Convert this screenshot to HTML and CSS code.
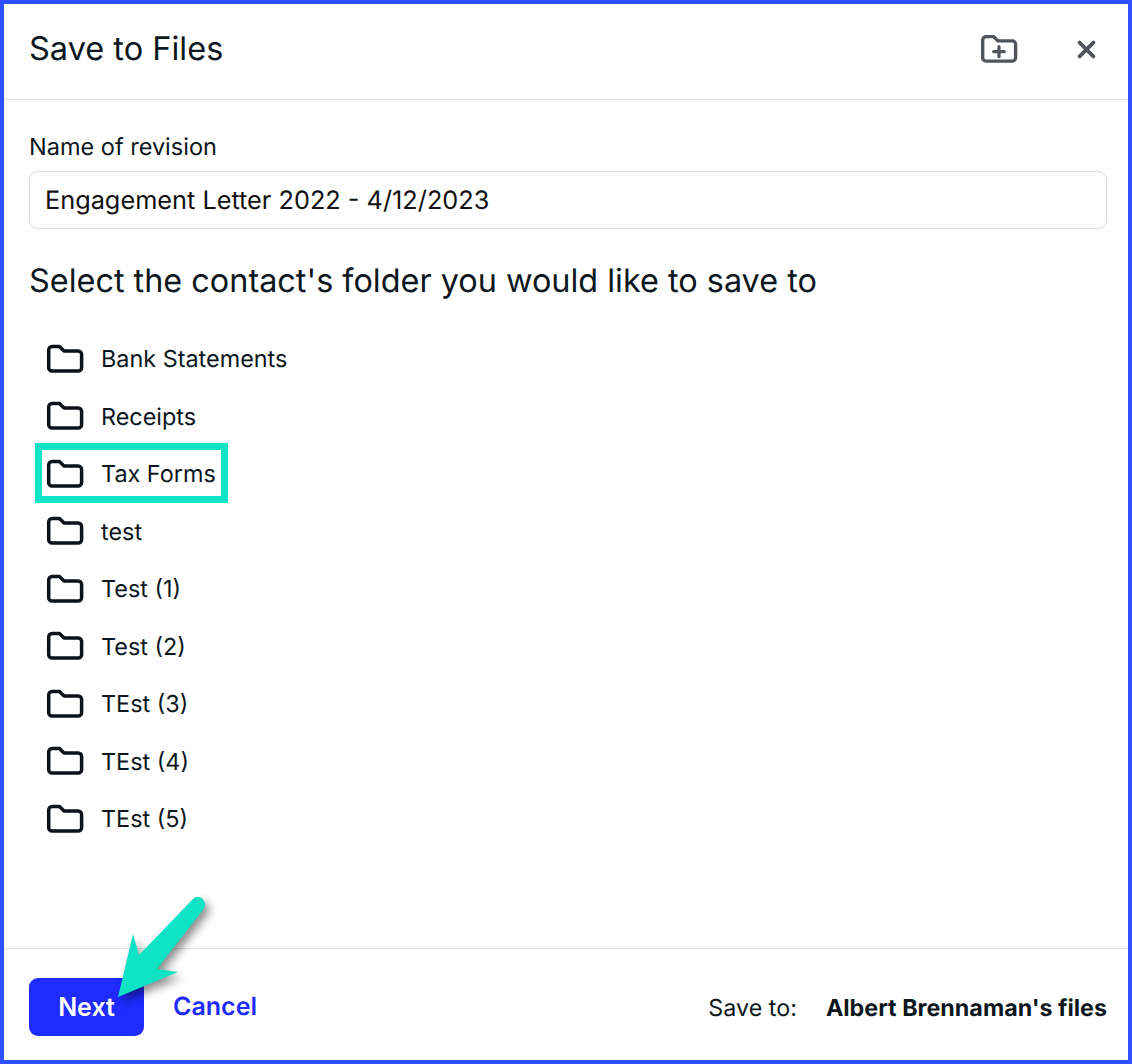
FILE: index.html
```html
<!DOCTYPE html>
<html lang="en">

<head>
    <meta charset="UTF-8">
    <title>Save to Files</title>
    <link rel="stylesheet" href="styles.css">
</head>

<body>
    <div class="dialog">
        <div class="dialog-header">
            <h1 class="dialog-title">Save to Files</h1>
            <svg class="new-folder" viewBox="0 0 38 30" fill="none">
                <path d="M2.700 6a3.400 3.400 0 0 1 3.400-3.400h7.400l4.500 4.300h14.200a3.400 3.400 0 0 1 3.400 3.400v13.400a3.400 3.400 0 0 1-3.400 3.400h-26.100a3.400 3.400 0 0 1-3.400-3.400z" stroke="#50555c" stroke-width="3.400" stroke-linejoin="round" />
                <path d="M19 12.700v10M13.700 17.700h10.600" stroke="#50555c" stroke-width="3.200" stroke-linecap="round" />
            </svg>
            <svg class="close" viewBox="0 0 18 18" fill="none">
                <path d="M2.500 2.500l13 13M15.500 2.500l-13 13" stroke="#50555c" stroke-width="3.600" stroke-linecap="round" />
            </svg>
        </div>

        <div class="dialog-body">
            <label class="field-label">Name of revision</label>
            <div class="text-input">Engagement Letter 2022 - 4/12/2023</div>
            <h2 class="section-title">Select the contact's folder you would like to save to</h2>

            <ul class="folders">
                <li class="folder"><svg class="folder-icon"><use href="#folder" /></svg>Bank Statements</li>
                <li class="folder"><svg class="folder-icon"><use href="#folder" /></svg>Receipts</li>
                <li class="folder"><svg class="folder-icon"><use href="#folder" /></svg>Tax Forms</li>
                <li class="folder"><svg class="folder-icon"><use href="#folder" /></svg>test</li>
                <li class="folder"><svg class="folder-icon"><use href="#folder" /></svg>Test (1)</li>
                <li class="folder"><svg class="folder-icon"><use href="#folder" /></svg>Test (2)</li>
                <li class="folder"><svg class="folder-icon"><use href="#folder" /></svg>TEst (3)</li>
                <li class="folder"><svg class="folder-icon"><use href="#folder" /></svg>TEst (4)</li>
                <li class="folder"><svg class="folder-icon"><use href="#folder" /></svg>TEst (5)</li>
            </ul>
        </div>

        <div class="dialog-footer">
            <button class="btn-next">Next</button>
            <a class="btn-cancel">Cancel</a>
            <span class="save-label">Save to:</span>
            <strong class="save-target">Albert Brennaman's files</strong>
        </div>
    </div>

    <!-- Annotations drawn over the screenshot -->
    <div class="highlight"></div>
    <svg class="arrow" viewBox="0 0 1132 1064" fill="none">
        <path d="M118 997L133 934L139 955L194 898A7.500 7.500 0 0 1 204 908.500L157 969L178 972Z" fill="#0fe3c5" />
    </svg>

    <svg class="defs" width="0" height="0">
        <symbol id="folder" viewBox="0 0 38 30">
            <path d="M2.700 6a3.400 3.400 0 0 1 3.400-3.400h7.400l4.500 4.300h14.200a3.400 3.400 0 0 1 3.400 3.400v13.400a3.400 3.400 0 0 1-3.400 3.400h-26.100a3.400 3.400 0 0 1-3.400-3.400z" fill="none" stroke="#0c1218" stroke-width="3.500" stroke-linejoin="round" />
        </symbol>
    </svg>
</body>

</html>
```

FILE: styles.css
```css
* {
    margin: 0;
    padding: 0;
    box-sizing: border-box;
}

body {
    width: 1132px;
    height: 1064px;
    background-color: #fff;
    font-family: 'Inter', sans-serif;
    color: #0c1720;
    overflow: hidden;
    text-rendering: geometricPrecision;
}

.dialog {
    width: 1132px;
    height: 1064px;
    border: 4px solid #2f50fb;
    display: flex;
    flex-direction: column;
}

.dialog-header {
    height: 96px;
    display: flex;
    align-items: center;
    padding: 0 32px 0 25px;
    border-bottom: 1px solid #e0e0e0;
}

.dialog-title {
    font-size: 32.500px;
    font-weight: 400;
    flex: 1;
    margin-top: -7px;
}

.new-folder {
    width: 38px;
    height: 30px;
    margin-right: 59px;
    margin-top: -5px;
}

.close {
    width: 19px;
    height: 19px;
    margin-top: -5px;
}

.dialog-body {
    flex: 1;
    padding: 33px 21px 0 25px;
}

.field-label {
    display: block;
    font-size: 23.500px;
    line-height: 28px;
    font-weight: 400;
}

.text-input {
    height: 58px;
    margin-top: 10px;
    padding: 0 15px;
    display: flex;
    align-items: center;
    border: 1px solid #dcdcdc;
    border-radius: 9px;
    font-size: 25.300px;
    color: #111;
}

.section-title {
    font-size: 32.400px;
    line-height: 38px;
    font-weight: 400;
    margin-top: 33px;
}

.folders {
    list-style: none;
    margin-top: 30px;
    padding-left: 17px;
}

.folder {
    height: 57.500px;
    display: flex;
    align-items: center;
    font-size: 23.400px;
}

.folder-icon {
    width: 38px;
    height: 30px;
    margin-right: 17px;
}

.dialog-footer {
    height: 112px;
    display: flex;
    align-items: center;
    padding: 5px 21px 0 25px;
    border-top: 1px solid #e0e0e0;
    font-size: 23.300px;
}

.btn-next {
    width: 115px;
    height: 58px;
    background-color: #1f2bff;
    color: #fff;
    border: none;
    border-radius: 9px;
    font-family: inherit;
    font-size: 25px;
    font-weight: 600;
}

.btn-cancel {
    margin-left: 29px;
    color: #1f2bff;
    font-size: 25px;
    font-weight: 600;
    flex: 1;
}

.save-label {
    margin-right: 29px;
}

.save-target {
    font-weight: 700;
}

.highlight {
    position: absolute;
    left: 35px;
    top: 443px;
    width: 193px;
    height: 60px;
    border: 7px solid #0fe3c5;
}

.arrow {
    position: absolute;
    left: 0;
    top: 0;
    width: 1132px;
    height: 1064px;
    filter: drop-shadow(4px 5px 5px rgba(0, 0, 0, 0.45));
}

.defs {
    position: absolute;
}
```
